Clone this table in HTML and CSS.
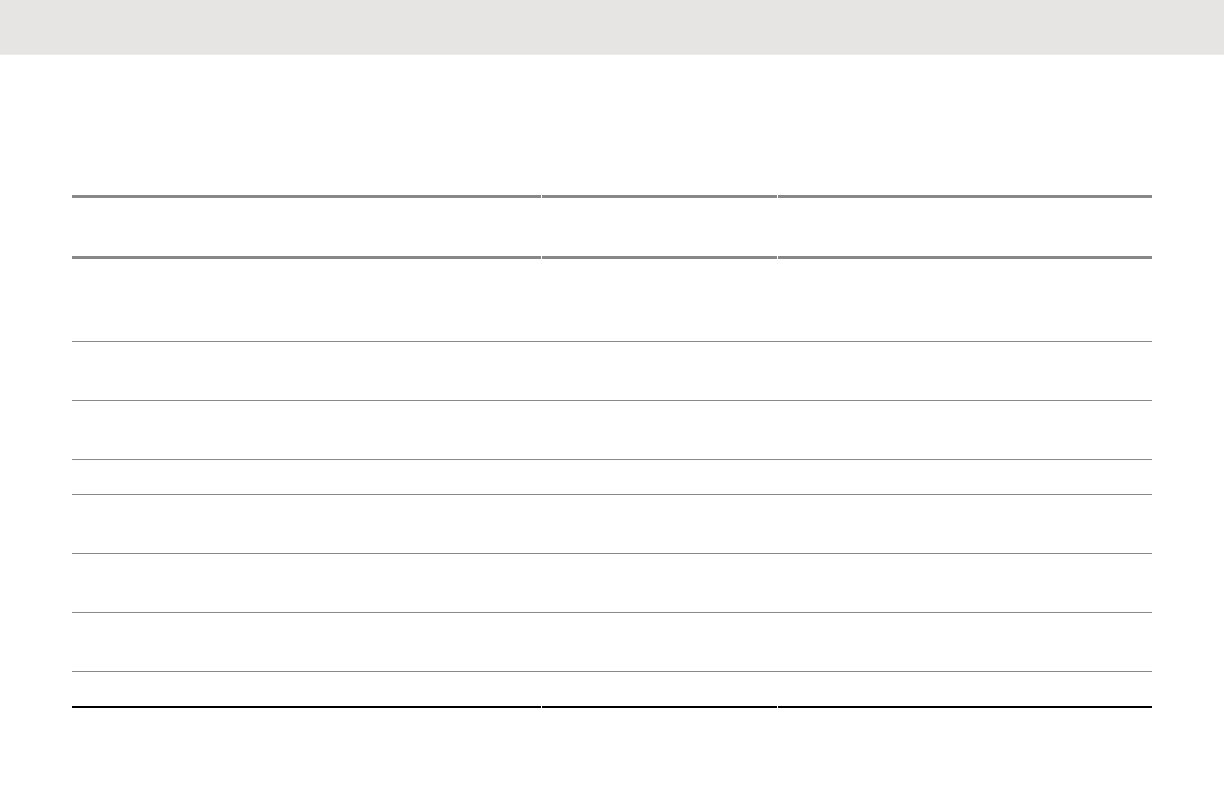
FILE: index.html
```html
<!DOCTYPE html>
<html lang="en">
<head>
<meta charset="utf-8">
<title>Table</title>
<link rel="stylesheet" href="styles.css">
</head>
<body>
<header class="topbar"></header>
<main class="content">
  <div class="table">
    <div class="row head"><div class="cell"></div><div class="cell"></div><div class="cell"></div></div>
    <div class="row tall"><div class="cell"></div><div class="cell"></div><div class="cell"></div></div>
    <div class="row normal"><div class="cell"></div><div class="cell"></div><div class="cell"></div></div>
    <div class="row normal"><div class="cell"></div><div class="cell"></div><div class="cell"></div></div>
    <div class="row short"><div class="cell"></div><div class="cell"></div><div class="cell"></div></div>
    <div class="row normal"><div class="cell"></div><div class="cell"></div><div class="cell"></div></div>
    <div class="row normal"><div class="cell"></div><div class="cell"></div><div class="cell"></div></div>
    <div class="row normal"><div class="cell"></div><div class="cell"></div><div class="cell"></div></div>
    <div class="row short last"><div class="cell"></div><div class="cell"></div><div class="cell"></div></div>
  </div>
</main>
</body>
</html>
```
FILE: styles.css
```css
html, body {
  margin: 0;
  padding: 0;
  background: #ffffff;
  font-family: "Liberation Sans", Arial, sans-serif;
  overflow: hidden;
}
.topbar {
  width: 100vw;
  height: 54px;
  background: #e6e5e3;
  border-bottom: 1px solid #eeedeb;
}
.content {
  padding: 140px 72px 0 72px;
}
.table {
  width: 1080px;
  display: flex;
  flex-direction: column;
}
.row {
  display: grid;
  grid-template-columns: 470px 235px 375px;
}
.head,
.last {
  grid-template-columns: 469px 235px 374px;
  column-gap: 1px;
}
.cell {
  border-bottom: 1px solid #8a8a8a;
}
.head .cell {
  border-top: 3px solid #888888;
  border-bottom: 3px solid #888888;
  height: 58px;
}
.tall .cell { height: 82px; }
.normal .cell { height: 58px; }
.short .cell { height: 34px; }
.last .cell {
  border-bottom: 2px solid #000000;
}
```
